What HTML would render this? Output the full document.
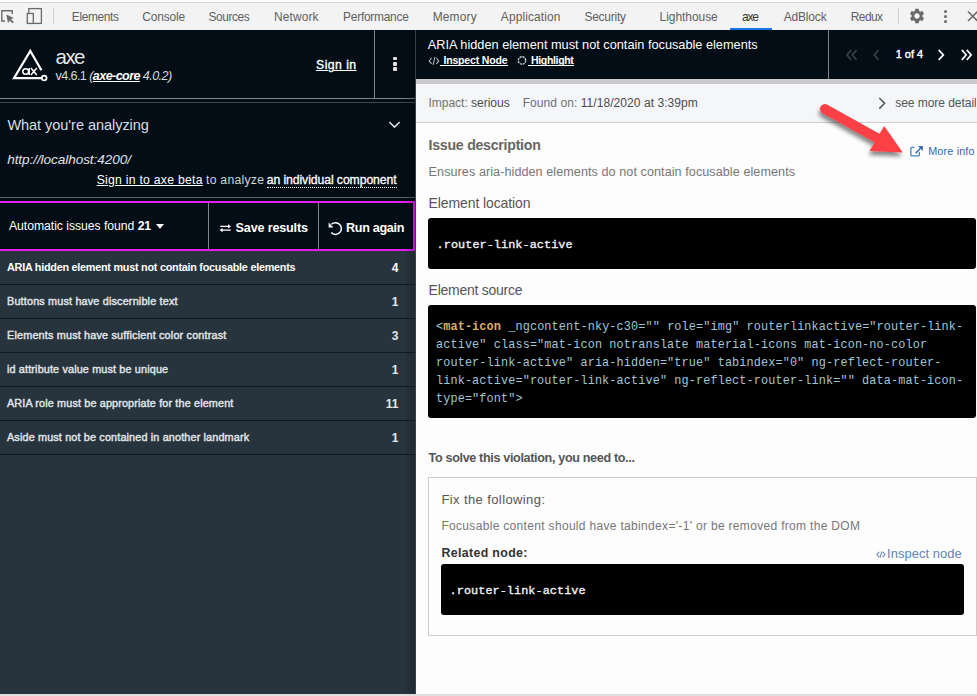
<!DOCTYPE html>
<html><head><meta charset="utf-8"><style>
html,body{margin:0;padding:0;width:977px;height:696px;overflow:hidden;background:#fdfdfd}
body{position:relative;font-family:"Liberation Sans",sans-serif}
.r{position:absolute}
.t{position:absolute;line-height:1;white-space:nowrap;font-family:"Liberation Sans",sans-serif}
.m{position:absolute;line-height:1;white-space:pre;font-family:"Liberation Mono",monospace}
</style></head><body>
<div class="r" style="left:0px;top:0px;width:977px;height:30px;background:#f3f3f3"></div>
<div class="r" style="left:0px;top:0px;width:977px;height:2px;background:#ffffff"></div>
<div class="r" style="left:0px;top:2px;width:977px;height:1px;background:#d4d4d4"></div>
<div class="t" style="left:71.80px;top:12.00px;font-size:11.93px;letter-spacing:-0.364px;color:#5f5f5f;"><span style="">Elements</span></div>
<div class="t" style="left:142.30px;top:12.00px;font-size:11.93px;letter-spacing:-0.131px;color:#5f5f5f;"><span style="">Console</span></div>
<div class="t" style="left:208.60px;top:12.00px;font-size:11.93px;letter-spacing:-0.446px;color:#5f5f5f;"><span style="">Sources</span></div>
<div class="t" style="left:274.00px;top:12.00px;font-size:11.93px;letter-spacing:0.139px;color:#5f5f5f;"><span style="">Network</span></div>
<div class="t" style="left:343.10px;top:12.00px;font-size:11.93px;letter-spacing:-0.251px;color:#5f5f5f;"><span style="">Performance</span></div>
<div class="t" style="left:432.70px;top:12.00px;font-size:11.93px;letter-spacing:0.181px;color:#5f5f5f;"><span style="">Memory</span></div>
<div class="t" style="left:500.80px;top:12.00px;font-size:11.93px;letter-spacing:0.132px;color:#5f5f5f;"><span style="">Application</span></div>
<div class="t" style="left:584.40px;top:12.00px;font-size:11.93px;letter-spacing:-0.201px;color:#5f5f5f;"><span style="">Security</span></div>
<div class="t" style="left:659.60px;top:12.00px;font-size:11.93px;letter-spacing:-0.021px;color:#5f5f5f;"><span style="">Lighthouse</span></div>
<div class="t" style="left:742.00px;top:12.00px;font-size:11.93px;letter-spacing:-1.120px;color:#333;"><span style="">axe</span></div>
<div class="t" style="left:783.70px;top:12.00px;font-size:11.93px;letter-spacing:-0.130px;color:#5f5f5f;"><span style="">AdBlock</span></div>
<div class="t" style="left:850.80px;top:12.00px;font-size:11.93px;letter-spacing:-0.574px;color:#5f5f5f;"><span style="">Redux</span></div>
<div class="r" style="left:730px;top:28px;width:42px;height:2px;background:#1a73e8"></div>
<div class="r" style="left:53px;top:8px;width:1px;height:16px;background:#d0d0d0"></div>
<div class="r" style="left:898px;top:8px;width:1px;height:16px;background:#d0d0d0"></div>
<svg class="r" style="left:0;top:0" width="60" height="30" viewBox="0 0 60 30"><path d="M5 21H1.8V10.8H12.2V14" fill="none" stroke="#6a6a6a" stroke-width="1.4"/><path d="M6.3 14.6L8 23.2 9.6 20.6 12.5 23.3 13.8 22 11 19.2 13.8 18z" fill="#6a6a6a"/><rect x="28.8" y="8.6" width="12.6" height="14.8" fill="none" stroke="#6a6a6a" stroke-width="1.3"/><rect x="27.3" y="13.5" width="6" height="9.9" fill="#f3f3f3" stroke="#6a6a6a" stroke-width="1.3"/></svg>
<svg class="r" style="left:908px;top:7px" width="18" height="18" viewBox="0 0 24 24"><path fill="#6a6a6a" d="M19.14 12.94c.04-.3.06-.61.06-.94 0-.32-.02-.64-.07-.94l2.03-1.58a.49.49 0 0 0 .12-.61l-1.92-3.32a.488.488 0 0 0-.59-.22l-2.39.96c-.5-.38-1.03-.7-1.620-.94l-.36-2.54a.484.484 0 0 0-.48-.41h-3.84c-.24 0-.43.17-.47.41l-.36 2.54c-.59.24-1.13.57-1.62.94l-2.39-.96c-.22-.08-.47 0-.59.22L2.740 8.87c-.12.21-.08.47.12.61l2.03 1.58c-.05.3-.09.63-.09.94s.02.64.07.94l-2.03 1.58a.49.49 0 0 0-.12.61l1.92 3.32c.12.22.37.29.59.22l2.39-.96c.5.38 1.03.7 1.62.94l.36 2.54c.05.24.24.41.48.41h3.84c.24 0 .44-.17.47-.41l.36-2.54c.59-.24 1.13-.56 1.62-.94l2.39.96c.22.08.47 0 .59-.22l1.920-3.32c.12-.22.07-.47-.12-.61l-2.01-1.58zM12 15.6c-1.98 0-3.6-1.62-3.6-3.6s1.62-3.6 3.6-3.6 3.6 1.62 3.6 3.6-1.62 3.6-3.6 3.6z"/></svg>
<div class="r" style="left:943.5px;top:9.9px;width:3px;height:3px;background:#6a6a6a;border-radius:50%"></div>
<div class="r" style="left:943.5px;top:14.9px;width:3px;height:3px;background:#6a6a6a;border-radius:50%"></div>
<div class="r" style="left:943.5px;top:19.9px;width:3px;height:3px;background:#6a6a6a;border-radius:50%"></div>
<svg class="r" style="left:966px;top:10px" width="12" height="12" viewBox="0 0 12 12"><path d="M2 1.5L11.5 11M11.5 1.5L2 11" stroke="#6a6a6a" stroke-width="1.6"/></svg>
<div class="r" style="left:0px;top:30px;width:416px;height:664px;background:#27343e"></div>
<div class="r" style="left:0px;top:30px;width:416px;height:221px;background:#020d16"></div>
<div class="r" style="left:0px;top:98px;width:415px;height:1px;background:#7d848a"></div>
<div class="r" style="left:374px;top:30px;width:1px;height:69px;background:#7d848a"></div>
<div class="r" style="left:0px;top:102px;width:415px;height:1px;background:#3f474e"></div>
<svg class="r" style="left:0;top:40px" width="55" height="50" viewBox="0 40 55 50"><path d="M41.4 70.2L30.3 51 14 78.2H41.5" fill="none" stroke="#ffffff" stroke-width="2.2" stroke-linejoin="miter"/><circle cx="44.2" cy="78" r="2.35" fill="none" stroke="#fff" stroke-width="1.7"/><ellipse cx="25.7" cy="71.5" rx="2.9" ry="2.75" fill="none" stroke="#fff" stroke-width="1.5"/><path d="M29.2 68.1V74.9M30.9 68.1L36.8 74.9M36.8 68.1L30.9 74.9" fill="none" stroke="#fff" stroke-width="1.5"/></svg>
<div class="t" style="left:55.50px;top:47.00px;font-size:20.50px;letter-spacing:-1.525px;color:#e3e7eb;"><span style="">axe</span></div>
<div class="t" style="left:55.50px;top:70.00px;font-size:12.62px;letter-spacing:-0.594px;color:#d5dadf;"><span style="">v4.6.1 </span><span style="font-style:italic;">(</span><span style="font-weight:bold;font-style:italic;color:#fff;text-decoration:underline;text-decoration-thickness:1px;text-underline-offset:0.5px">axe-core</span><span style="font-style:italic;"> 4.0.2)</span></div>
<div class="t" style="left:316.10px;top:59.00px;font-size:12.21px;letter-spacing:0.445px;color:#fff;-webkit-text-stroke:0.35px #fff"><span style="text-decoration:underline;text-decoration-thickness:1px;text-underline-offset:0.5px">Sign in</span></div>
<div class="r" style="left:393.2px;top:56.6px;width:3.8px;height:3.8px;background:#e2e2e2;border-radius:1px"></div>
<div class="r" style="left:393.2px;top:61.9px;width:3.8px;height:3.8px;background:#e2e2e2;border-radius:1px"></div>
<div class="r" style="left:393.2px;top:67.2px;width:3.8px;height:3.8px;background:#e2e2e2;border-radius:1px"></div>
<div class="t" style="left:7.40px;top:118.00px;font-size:14.54px;letter-spacing:-0.050px;color:#d8dde2;"><span style="">What you're analyzing</span></div>
<svg class="r" style="left:385px;top:115px" width="20" height="16" viewBox="385 115 20 16"><path d="M389.3 122L394.5 127.1L399.7 122" fill="none" stroke="#e0e0e0" stroke-width="1.5"/></svg>
<div class="t" style="left:7.20px;top:153.00px;font-size:13.60px;letter-spacing:-0.081px;color:#e0e4e8;"><span style="font-style:italic;">http://localhost:4200/</span></div>
<div class="t" style="left:96.70px;top:174.00px;font-size:12.21px;letter-spacing:0.260px;color:#fff;"><span style="text-decoration:underline;text-decoration-thickness:1px;text-underline-offset:0.5px">Sign in to axe beta</span></div>
<div class="t" style="left:206.00px;top:174.00px;font-size:12.21px;letter-spacing:0.261px;color:#d0d5da;"><span style="">to analyze</span></div>
<div class="t" style="left:266.70px;top:174.00px;font-size:12.21px;letter-spacing:-0.076px;color:#fff;-webkit-text-stroke:0.3px #fff"><span style="border-bottom:1px dotted #fff">an individual component</span></div>
<div class="r" style="left:0px;top:197px;width:415px;height:1px;background:#5a6168"></div>
<div class="r" style="left:0px;top:201px;width:415px;height:2px;background:#e01ff0"></div>
<div class="r" style="left:0px;top:249px;width:415px;height:2px;background:#e01ff0"></div>
<div class="r" style="left:413px;top:201px;width:2px;height:50px;background:#e01ff0"></div>
<div class="r" style="left:208px;top:203px;width:1px;height:46px;background:#7d848a"></div>
<div class="r" style="left:318px;top:203px;width:1px;height:46px;background:#7d848a"></div>
<div class="t" style="left:9.00px;top:220.00px;font-size:12.21px;letter-spacing:-0.041px;color:#fff;"><span style="">Automatic issues found </span><span style="font-weight:bold;">21</span></div>
<svg class="r" style="left:155px;top:223px" width="10" height="7" viewBox="0 0 10 7"><path d="M1 1h8L5 5.8z" fill="#fff"/></svg>
<svg class="r" style="left:216px;top:219px" width="18" height="16" viewBox="216 219 18 16"><path d="M220.3 226.4H229M221.5 230.1H230.8" fill="none" stroke="#fff" stroke-width="1.4"/><path d="M231 226.4L228 224.2V228.6z M219.6 230.1L222.6 227.9V232.3z" fill="#fff"/></svg>
<div class="t" style="left:235.60px;top:222.00px;font-size:12.62px;letter-spacing:-0.178px;color:#fff;"><span style="font-weight:bold;">Save results</span></div>
<svg class="r" style="left:324px;top:218px" width="22" height="20" viewBox="324 218 22 20"><path d="M331.4 224.3A5.9 5.9 0 1 1 331.2 232.6" fill="none" stroke="#fff" stroke-width="1.5"/><path d="M328.6 222.6V227.4H333.4z" fill="#fff"/></svg>
<div class="t" style="left:346.00px;top:222.00px;font-size:12.62px;letter-spacing:-0.312px;color:#fff;"><span style="font-weight:bold;">Run again</span></div>
<div class="t" style="left:7.00px;top:262.00px;font-size:10.84px;letter-spacing:-0.253px;color:#ffffff;"><span style="font-weight:bold;">ARIA hidden element must not contain focusable elements</span></div>
<div class="t" style="right:578.5px;top:261.74px;font-size:12px;color:#ffffff"><b>4</b></div>
<div class="r" style="left:0px;top:284px;width:415px;height:1px;background:#121a21"></div>
<div class="t" style="left:7.00px;top:296.00px;font-size:10.84px;letter-spacing:0.169px;color:#e2e6ea;-webkit-text-stroke:0.4px #e2e6ea"><span style="">Buttons must have discernible text</span></div>
<div class="t" style="right:578.5px;top:295.74px;font-size:12px;color:#e2e6ea"><b>1</b></div>
<div class="r" style="left:0px;top:318px;width:415px;height:1px;background:#121a21"></div>
<div class="t" style="left:7.00px;top:330.00px;font-size:10.84px;letter-spacing:0.179px;color:#e2e6ea;-webkit-text-stroke:0.4px #e2e6ea"><span style="">Elements must have sufficient color contrast</span></div>
<div class="t" style="right:578.5px;top:329.74px;font-size:12px;color:#e2e6ea"><b>3</b></div>
<div class="r" style="left:0px;top:352px;width:415px;height:1px;background:#121a21"></div>
<div class="t" style="left:7.00px;top:364.00px;font-size:10.84px;letter-spacing:0.143px;color:#e2e6ea;-webkit-text-stroke:0.4px #e2e6ea"><span style="">id attribute value must be unique</span></div>
<div class="t" style="right:578.5px;top:363.74px;font-size:12px;color:#e2e6ea"><b>1</b></div>
<div class="r" style="left:0px;top:386px;width:415px;height:1px;background:#121a21"></div>
<div class="t" style="left:7.00px;top:398.00px;font-size:10.84px;letter-spacing:0.137px;color:#e2e6ea;-webkit-text-stroke:0.4px #e2e6ea"><span style="">ARIA role must be appropriate for the element</span></div>
<div class="t" style="right:578.5px;top:397.74px;font-size:12px;color:#e2e6ea"><b>11</b></div>
<div class="r" style="left:0px;top:420px;width:415px;height:1px;background:#121a21"></div>
<div class="t" style="left:7.00px;top:432.00px;font-size:10.84px;letter-spacing:0.147px;color:#e2e6ea;-webkit-text-stroke:0.4px #e2e6ea"><span style="">Aside must not be contained in another landmark</span></div>
<div class="t" style="right:578.5px;top:431.74px;font-size:12px;color:#e2e6ea"><b>1</b></div>
<div class="r" style="left:0px;top:454px;width:415px;height:1px;background:#121a21"></div>
<div class="r" style="left:404px;top:30px;width:11px;height:664px;background:linear-gradient(to right,rgba(0,0,0,0),rgba(0,0,0,0.2))"></div>
<div class="r" style="left:415px;top:30px;width:1px;height:664px;background:#3a4248"></div>
<div class="r" style="left:416px;top:30px;width:561px;height:664px;background:#fdfdfd"></div>
<div class="r" style="left:416px;top:30px;width:561px;height:49px;background:#020d16"></div>
<div class="r" style="left:828px;top:30px;width:1px;height:49px;background:#7d848a"></div>
<div class="r" style="left:416px;top:79px;width:561px;height:5px;background:#cbcbcb"></div>
<div class="t" style="left:427.80px;top:39.00px;font-size:12.76px;letter-spacing:-0.008px;color:#fff;"><span style="">ARIA hidden element must not contain focusable elements</span></div>
<svg class="r" style="left:428px;top:56px" width="12" height="9" viewBox="0 0 12 9"><path d="M3.6 2L1.2 4.9l2.4 2.9M8.4 2l2.4 2.9-2.4 2.9M6.9 1L5.1 8.8" fill="none" stroke="#b8b8b8" stroke-width="1.1"/></svg>
<div class="r" style="left:440px;top:65px;width:68px;height:1px;background:#fff"></div>
<div class="t" style="left:443.40px;top:55.00px;font-size:10.56px;letter-spacing:-0.192px;color:#fff;"><span style="font-weight:bold;">Inspect Node</span></div>
<svg class="r" style="left:516px;top:55px" width="12" height="11" viewBox="0 0 12 11"><circle cx="6" cy="5.5" r="3.7" fill="none" stroke="#cfcfcf" stroke-width="1.4" stroke-dasharray="2.1 0.8"/></svg>
<div class="r" style="left:528px;top:65px;width:46px;height:1px;background:#fff"></div>
<div class="t" style="left:531.00px;top:55.00px;font-size:10.56px;letter-spacing:-0.357px;color:#fff;"><span style="font-weight:bold;">Highlight</span></div>
<svg class="r" style="left:840px;top:45px" width="137" height="18" viewBox="840 45 137 18"><path d="M851.3 49.9L847 54.9l4.3 5M856.6 49.9L852.3 54.9l4.3 5M878.6 49.9L874.3 54.9l4.3 5" fill="none" stroke="#3a434b" stroke-width="1.6"/><path d="M938.7 49.9L943.4 54.9l-4.7 5M961.8 49.9l4.4 5-4.4 5M966.8 49.9l4.4 5-4.4 5" fill="none" stroke="#fff" stroke-width="1.6"/></svg>
<div class="t" style="left:895.80px;top:49.00px;font-size:10.97px;letter-spacing:-0.051px;color:#fff;-webkit-text-stroke:0.4px #fff"><span style="">1 of 4</span></div>
<div class="r" style="left:416px;top:84px;width:561px;height:38px;background:#f4f6f9"></div>
<div class="r" style="left:416px;top:122px;width:561px;height:1px;background:#c9cbce"></div>
<div class="t" style="left:428.40px;top:97.00px;font-size:12.07px;letter-spacing:-0.032px;color:#444;"><span style="color:#727272">Impact: </span><span style="color:#4d4d4d">serious</span></div>
<div class="t" style="left:522.70px;top:97.00px;font-size:12.07px;letter-spacing:0.036px;color:#444;"><span style="color:#727272">Found on: </span><span style="color:#4d4d4d">11/18/2020 at 3:39pm</span></div>
<svg class="r" style="left:876px;top:96px" width="12" height="15" viewBox="0 0 12 15"><path d="M3.3 2l5.3 5.3-5.3 5.3" fill="none" stroke="#555" stroke-width="1.5"/></svg>
<div class="t" style="left:895.20px;top:97.00px;font-size:12.07px;letter-spacing:-0.066px;color:#555;white-space:nowrap"><span style="">see more detail</span></div>
<div class="r" style="left:976px;top:90px;width:1px;height:25px;background:#f4f6f9"></div>
<div class="t" style="left:428.60px;top:138.00px;font-size:14.13px;letter-spacing:-0.250px;color:#666;"><span style="font-weight:bold;">Issue description</span></div>
<svg class="r" style="left:908px;top:143px" width="16" height="16" viewBox="908 143 16 16"><path d="M914.5 147.4H911.8Q910.9 147.4 910.9 148.3V154.9Q910.9 155.8 911.8 155.8H918.4Q919.3 155.8 919.3 154.9V152" fill="none" stroke="#4585bd" stroke-width="1.3"/><path d="M915.6 153.2L921.3 147.5" fill="none" stroke="#3a6db3" stroke-width="1.6"/><path d="M918 146.1H922.9V151z" fill="#3a6db3"/></svg>
<div class="t" style="left:928.20px;top:146.00px;font-size:10.84px;letter-spacing:0.154px;color:#3467b0;"><span style="">More info</span></div>
<div class="t" style="left:428.60px;top:166.00px;font-size:12.62px;letter-spacing:0.066px;color:#777;"><span style="">Ensures aria-hidden elements do not contain focusable elements</span></div>
<div class="t" style="left:428.60px;top:196.00px;font-size:13.99px;letter-spacing:-0.102px;color:#555;"><span style="">Element location</span></div>
<div class="r" style="left:428px;top:218px;width:548px;height:51px;background:#000;border-radius:3px"></div>
<div class="m" style="left:436.6px;top:239.66px;font-size:11.8px;letter-spacing:0.08px;color:#f2f2f2;-webkit-text-stroke:0.35px #f2f2f2">.router-link-active</div>
<div class="t" style="left:428.60px;top:283.00px;font-size:13.99px;letter-spacing:-0.254px;color:#555;"><span style="">Element source</span></div>
<div class="r" style="left:428px;top:305px;width:548px;height:113px;background:#000;border-radius:3px"></div>
<div class="m" style="left:436.0px;top:322.32px;font-size:11.85px;letter-spacing:0.115px;color:#a0c6d6">&lt;<b style="color:#dcac66">mat-icon</b> _ngcontent-nky-c30="" role="img" routerlinkactive="router-link-</div>
<div class="m" style="left:436.0px;top:340.17px;font-size:11.85px;letter-spacing:0.115px;color:#a0c6d6">active" class="mat-icon notranslate material-icons mat-icon-no-color</div>
<div class="m" style="left:436.0px;top:358.02px;font-size:11.85px;letter-spacing:0.115px;color:#a0c6d6">router-link-active" aria-hidden="true" tabindex="0" ng-reflect-router-</div>
<div class="m" style="left:436.0px;top:375.87px;font-size:11.85px;letter-spacing:0.115px;color:#a0c6d6">link-active="router-link-active" ng-reflect-router-link="" data-mat-icon-</div>
<div class="m" style="left:436.0px;top:393.72px;font-size:11.85px;letter-spacing:0.115px;color:#a0c6d6">type="font"&gt;</div>
<div class="t" style="left:428.60px;top:452.00px;font-size:12.60px;letter-spacing:-0.347px;color:#555;"><span style="font-weight:bold;">To solve this violation, you need to...</span></div>
<div class="r" style="left:428px;top:477px;width:549px;height:159px;border:1px solid #cdcdcd;box-sizing:border-box;background:#fdfdfd"></div>
<div class="t" style="left:441.40px;top:493.00px;font-size:13.00px;letter-spacing:0.399px;color:#555;"><span style="">Fix the following:</span></div>
<div class="t" style="left:441.40px;top:520.00px;font-size:12.00px;letter-spacing:0.321px;color:#777;"><span style="">Focusable content should have tabindex='-1' or be removed from the DOM</span></div>
<div class="t" style="left:441.40px;top:547.00px;font-size:12.35px;letter-spacing:0.365px;color:#333;"><span style="font-weight:bold;">Related node:</span></div>
<svg class="r" style="left:874px;top:549px" width="14" height="11" viewBox="874 549 14 11"><path d="M879.3 551.9L876.9 554.5L879.3 557.1M882.7 551.9L885.1 554.5L882.7 557.1M881.9 551.4L880.1 557.6" fill="none" stroke="#6a88b8" stroke-width="1.1"/></svg>
<div class="t" style="left:887.00px;top:548.00px;font-size:12.89px;letter-spacing:0.079px;color:#6482b4;"><span style="">Inspect node</span></div>
<div class="r" style="left:441px;top:564px;width:523px;height:51px;background:#000;border-radius:3px"></div>
<div class="m" style="left:449.6px;top:585.66px;font-size:11.8px;letter-spacing:0.08px;color:#f2f2f2;-webkit-text-stroke:0.35px #f2f2f2">.router-link-active</div>
<svg class="r" style="left:800px;top:90px" width="120" height="80" viewBox="800 90 120 80"><defs><filter id="sh" x="-30%" y="-30%" width="160%" height="170%"><feGaussianBlur in="SourceAlpha" stdDeviation="2.3"/><feOffset dx="-1.5" dy="4"/><feComponentTransfer><feFuncA type="linear" slope="0.48"/></feComponentTransfer><feMerge><feMergeNode/><feMergeNode in="SourceGraphic"/></feMerge></filter></defs><g filter="url(#sh)"><path d="M825 109L877 138" stroke="#fd3f44" stroke-width="10" stroke-linecap="round"/><path d="M884.2 126L869.7 151.1L902.7 152.5z" fill="#fd3f44"/></g></svg>
<div class="r" style="left:0px;top:694px;width:977px;height:2px;background:#dedede"></div>
</body></html>
